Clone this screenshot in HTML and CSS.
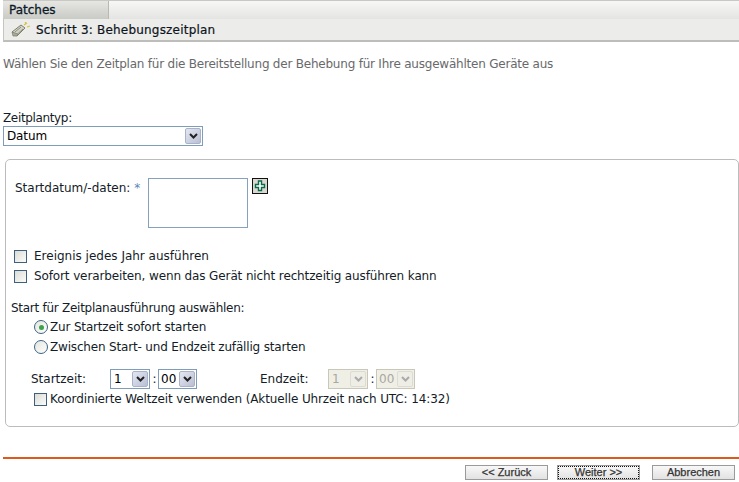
FILE: index.html
```html
<!DOCTYPE html>
<html lang="de">
<head>
<meta charset="utf-8">
<title>Patches</title>
<link rel="stylesheet" href="styles.css">
</head>
<body>
<div class="tabbar"><div class="tab">Patches</div></div>
<div class="stepbar">
  <svg class="stepicon" width="20" height="16" viewBox="0 0 20 16"><path d="M1 10l9-7 4 3-8 8z" fill="#d2d2c4" stroke="#7d7d70"/><path d="M4 10l6-5M6.500 12l5.500-5" stroke="#8f8f7c" fill="none"/><path d="M1 10l1 4 4 0 1-2z" fill="#a9a994" stroke="#7d7d70" stroke-width=".7"/><path d="M13 3l3-2M16 5l3-1M14 1l1-1" stroke="#d8c23a" stroke-width="1.300"/></svg>
  <span>Schritt 3: Behebungszeitplan</span>
</div>
<p class="intro">Wählen Sie den Zeitplan für die Bereitstellung der Behebung für Ihre ausgewählten Geräte aus</p>
<div class="typefield">
  <div class="typelabel">Zeitplantyp:</div>
  <div class="select select-type"><span>Datum</span><i class="arrow"><svg width="9" height="6" viewBox="0 0 9 6"><path d="M1 1l3.500 3.500L8 1" fill="none" stroke="#222" stroke-width="2"/></svg></i></div>
</div>
<section class="panel">
  <div class="daterow">
    <div class="datelabel">Startdatum/-daten: <span class="req">*</span></div>
    <div class="listbox"></div>
    <div class="plus"><svg width="12" height="12" viewBox="0 0 12 12"><path d="M4.500 1h3v3.500h3v3h-3v3h-3v-3h-3v-3h3z" fill="#fff" stroke="#0a6a4a" stroke-width="1.400"/></svg></div>
  </div>
  <div class="checks">
    <div class="checkrow check-short"><span class="box"></span>Ereignis jedes Jahr ausführen</div>
    <div class="checkrow"><span class="box"></span>Sofort verarbeiten, wenn das Gerät nicht rechtzeitig ausführen kann</div>
  </div>
  <div class="starthead">Start für Zeitplanausführung auswählen:</div>
  <div class="radios">
    <div class="radiorow"><span class="radio on"></span>Zur Startzeit sofort starten</div>
    <div class="radiorow"><span class="radio"></span>Zwischen Start- und Endzeit zufällig starten</div>
  </div>
  <div class="timerow">
    <span class="timelabel">Startzeit:</span>
    <div class="select select-h"><span>1</span><i class="arrow"><svg width="9" height="6" viewBox="0 0 9 6"><path d="M1 1l3.500 3.500L8 1" fill="none" stroke="#222" stroke-width="2"/></svg></i></div>
    <span class="colon">:</span>
    <div class="select select-m"><span>00</span><i class="arrow"><svg width="9" height="6" viewBox="0 0 9 6"><path d="M1 1l3.500 3.500L8 1" fill="none" stroke="#222" stroke-width="2"/></svg></i></div>
    <span class="timelabel endlabel">Endzeit:</span>
    <div class="select select-h off"><span>1</span><i class="arrow"><svg width="9" height="6" viewBox="0 0 9 6"><path d="M1 1l3.500 3.500L8 1" fill="none" stroke="#aaa" stroke-width="2"/></svg></i></div>
    <span class="colon">:</span>
    <div class="select select-m off"><span>00</span><i class="arrow"><svg width="9" height="6" viewBox="0 0 9 6"><path d="M1 1l3.500 3.500L8 1" fill="none" stroke="#aaa" stroke-width="2"/></svg></i></div>
  </div>
  <div class="utcrow"><span class="box"></span>Koordinierte Weltzeit verwenden (Aktuelle Uhrzeit nach UTC: 14:32)</div>
</section>
<div class="footer">
  <button class="btn">&lt;&lt; Zurück</button>
  <button class="btn btn-focus">Weiter &gt;&gt;</button>
  <button class="btn btn-strong">Abbrechen</button>
</div>
</body>
</html>
```
FILE: styles.css
```css
* { box-sizing: border-box; }
html, body { margin: 0; padding: 0; }
body {
  width: 739px;
  height: 482px;
  overflow: hidden;
  background: #fff;
  color: #141c28;
  font: 12px/14px "DejaVu Sans", Verdana, sans-serif;
  letter-spacing: -0.12px;
}
.tabbar {
  height: 19px;
  margin-left: 3px;
  background: linear-gradient(#f7f7f5, #e4e5e2);
  border-top: 1px solid #c8c8c4;
}
.tab {
  width: 106px;
  height: 18px;
  padding-left: 6px;
  line-height: 18px;
  letter-spacing: 0;
  color: #0c1a2a;
  -webkit-text-stroke: 0.3px #0c1a2a;
  background: linear-gradient(#e6e6e2, #c9cbc5);
  border-right: 1px solid #b9b9b4;
}
.stepbar {
  display: flex;
  align-items: center;
  height: 23px;
  margin-left: 3px;
  padding-left: 7px;
  gap: 5px;
  background: #ececea;
  border-left: 1px solid #c4c4c0;
  border-bottom: 2px solid #bdbdb9;
  color: #0c1420;
  letter-spacing: 0.2px;
  -webkit-text-stroke: 0.2px #0c1420;
}
.intro {
  margin: 15px 0 0 3px;
  color: #68696b;
  line-height: 14px;
  letter-spacing: -0.22px;
}
.typefield { margin: 40px 0 0 3px; }
.typelabel { height: 15px; letter-spacing: -0.35px; }
.select {
  display: flex;
  align-items: center;
  justify-content: space-between;
  height: 20px;
  padding: 1px 1px 1px 3px;
  background: #fff;
  border: 1px solid #7f9db9;
  color: #000;
}
.select-type { width: 200px; }
.arrow {
  display: flex;
  align-items: center;
  justify-content: center;
  width: 16px;
  height: 100%;
  border: 1px solid #a9b2c6;
  border-radius: 2px;
  background: linear-gradient(135deg, #e4e7f2, #b9bfd4);
}
.panel {
  width: 734px;
  height: 268px;
  margin: 13px 0 0 5px;
  padding: 18px 0 0 5px;
  border: 1px solid #bcbcbc;
  border-radius: 5px;
}
.daterow { display: flex; align-items: flex-start; height: 50px; }
.datelabel { width: 137px; padding: 3px 0 0 4px; white-space: nowrap; letter-spacing: 0; }
.req { color: #5d86b5; }
.listbox {
  width: 100px;
  height: 50px;
  border: 1px solid #85a1bd;
}
.plus {
  display: flex;
  align-items: center;
  justify-content: center;
  width: 16px;
  height: 16px;
  margin-left: 4px;
  background: #d9d9d0;
  border: 1px solid #111;
}
.checks { margin-top: 21px; display: flex; flex-direction: column; gap: 6px; padding-left: 3px; }
.checkrow { display: flex; align-items: center; height: 14px; white-space: nowrap; }
.check-short { letter-spacing: 0; }
.box {
  flex: none;
  width: 13px;
  height: 13px;
  margin-right: 7px;
  border: 1px solid #3f5f7f;
  background: linear-gradient(135deg, #dcdcd6, #fbfbf9);
}
.starthead { margin-top: 18px; letter-spacing: -0.27px; }
.radios { margin: 5px 0 0 23px; display: flex; flex-direction: column; gap: 6px; }
.radiorow { display: flex; align-items: center; height: 14px; white-space: nowrap; letter-spacing: -0.17px; }
.radio {
  flex: none;
  display: flex;
  align-items: center;
  justify-content: center;
  width: 14px;
  height: 14px;
  margin-right: 2px;
  border: 1px solid #3c6488;
  border-radius: 50%;
  background: linear-gradient(135deg, #e6e6e0, #fdfdfb);
}
.radio.on::after {
  content: "";
  width: 5px;
  height: 5px;
  border-radius: 50%;
  background: #3fa14b;
}
.timerow { display: flex; align-items: center; height: 20px; margin: 15px 0 0 20px; letter-spacing: 0; }
.timelabel { width: 79px; flex: none; }
.endlabel { width: 68px; margin-left: 63px; }
.select-h { width: 40px; }
.select-m { width: 39px; padding-left: 2px; }
.colon { width: 8px; padding-left: 1px; text-align: center; }
.select.off {
  color: #a8a8a0;
  background: #f0efe6;
  border-color: #c9c7ba;
}
.off .arrow { background: #eeeee6; border-color: #dcdcd2; }
.utcrow {
  display: flex;
  align-items: center;
  height: 14px;
  margin: 3px 0 0 23px;
  white-space: nowrap;
}
.utcrow .box { margin-right: 3px; }
.footer {
  display: flex;
  justify-content: flex-end;
  gap: 9px;
  margin: 30px 0 0 3px;
  padding: 6px 4px 0 0;
  border-top: 2px solid #dd5a1c;
}
.btn {
  width: 83px;
  height: 15px;
  padding: 0;
  font: 11px/13px "Liberation Sans", Arial, sans-serif;
  color: #333;
  background: linear-gradient(#f8f8f8, #e2e2e2);
  border: 1px solid #9a9a9a;
  -webkit-text-stroke: 0.25px #333;
}
.btn-focus { outline: 1px dotted #111; outline-offset: -2px; margin-right: 3px; }
```
